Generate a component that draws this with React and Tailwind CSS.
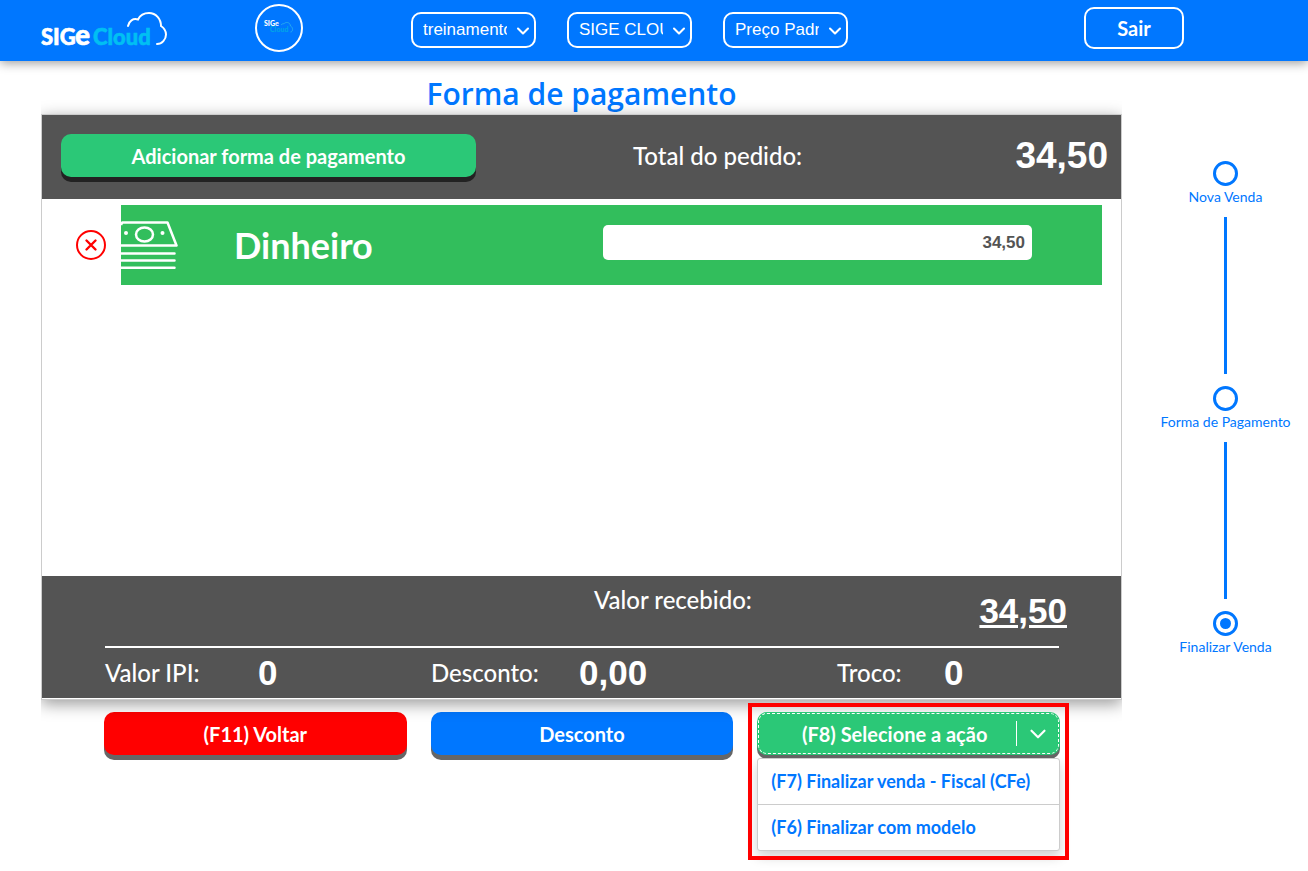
import { useState } from "react";
import { ChevronDown } from "lucide-react";

const storeFilters = [
  { id: "ambiente", label: "Ambiente", options: ["treinamento"] },
  { id: "empresa", label: "Empresa", options: ["SIGE CLOUD"] },
  { id: "tabela", label: "Tabela de preço", options: ["Preço Padrão"] },
];

const steps = ["Nova Venda", "Forma de Pagamento", "Finalizar Venda"];

const totals = [
  { label: "Valor IPI:", value: "0", labelClass: "w-[153px]" },
  { label: "Desconto:", value: "0,00", labelClass: "w-[148px]" },
  { label: "Troco:", value: "0", labelClass: "ml-20 w-[107px]" },
];

const actions = ["(F7) Finalizar venda - Fiscal (CFe)", "(F6) Finalizar com modelo"];

function Logo() {
  return (
    <svg width="127" height="46" viewBox="0 0 127 46" role="img" aria-label="SIGE Cloud" className="overflow-visible">
      <g fontFamily="Lato, sans-serif" fontWeight="900" strokeWidth="0.600">
        <text x="0" y="40" fontSize="22" fill="#fff" stroke="#fff">
          SIG
        </text>
        <text x="34" y="40" fontSize="28" fill="#fff" stroke="#fff">
          e
        </text>
        <text x="52" y="40" fontSize="22" fill="#00bff3" stroke="#00bff3">
          Cloud
        </text>
      </g>
      <path
        d="M87 21c1-5 5-8 10-6.500 2-4 6-6.500 11-6.500 7 0 12 6 12 13 3 2 5 5 5 8.500 0 5-4 9.500-9 9.500"
        fill="none"
        stroke="#fff"
        strokeWidth="2"
        strokeLinecap="round"
      />
    </svg>
  );
}

function LogoBadge() {
  return (
    <div className="flex h-12 w-12 items-center justify-center rounded-full border-2 border-white">
      <svg width="30" height="20" viewBox="0 0 30 20" role="img" aria-label="SIGE Cloud" className="overflow-visible">
        <g fontFamily="Lato, sans-serif" fontWeight="900">
          <text x="0" y="8" fontSize="7" fill="#fff">
            SIGe
          </text>
          <text x="6" y="14" fontSize="7" fill="#00a5e8">
            Cloud
          </text>
        </g>
        <path
          d="M17 7c1-1 2-1.500 3-1.200C21 4 26 3.500 26.500 8c3 1.500 2.500 6 0 6"
          fill="none"
          stroke="#2fb4e8"
          strokeWidth="0.800"
        />
      </svg>
    </div>
  );
}

function MoneyIcon() {
  return (
    <svg width="57" height="50" viewBox="0 0 57 50" fill="none" stroke="#fff" strokeWidth="2.500" aria-hidden="true">
      <path d="M0 5 1.200 2.500H46.500L55.500 25.500H0" strokeLinejoin="round" />
      <ellipse cx="23.500" cy="14.500" rx="8.500" ry="7" />
      <circle cx="5" cy="13" r="2" fill="#fff" stroke="none" />
      <circle cx="41.500" cy="13" r="2" fill="#fff" stroke="none" />
      <path d="M0 33.500h53.500M0 40.500h53.500M0 47.700h53.500" strokeLinecap="round" />
    </svg>
  );
}

function Header() {
  return (
    <header className="relative z-10 flex h-[61px] items-center bg-[#0077ff] pb-[5px] pl-[41px] pr-[124px] shadow-[0_2px_10px_rgba(0,0,0,0.4)]">
      <Logo />
      <div className="ml-[87px]">
        <LogoBadge />
      </div>
      <div className="ml-[108px] flex gap-[31px] pt-1">
        {storeFilters.map((filter) => (
          <div key={filter.id} className="relative">
            <select
              id={filter.id}
              aria-label={filter.label}
              className="h-9 w-[125px] appearance-none rounded-[10px] border-2 border-white bg-transparent pl-[10px] pr-[27px] font-['Liberation_Sans',Arial,sans-serif] text-[17px] text-white"
            >
              {filter.options.map((option) => (
                <option key={option}>{option}</option>
              ))}
            </select>
            <ChevronDown
              size={20}
              strokeWidth={2.5}
              className="pointer-events-none absolute right-[3px] top-[9px] text-white"
            />
          </div>
        ))}
      </div>
      <button
        type="button"
        className="ml-auto h-[42px] w-[100px] rounded-[10px] border-2 border-white text-xl font-bold text-white"
      >
        Sair
      </button>
    </header>
  );
}

function PaymentPanel() {
  return (
    <section className="border border-[#ccc] bg-white shadow-[0_4px_15px_rgba(0,0,0,0.4)] [clip-path:inset(-30px_0px)]">
      <div className="flex h-[84px] items-center bg-[#545454] pb-[3px] pl-[19px] pr-[13px] text-white">
        <button
          type="button"
          className="h-[43px] w-[415px] rounded-[10px] bg-[#2bc877] text-xl font-bold shadow-[0_5px_0_#222]"
        >
          Adicionar forma de pagamento
        </button>
        <span className="ml-[157px] text-2xl font-medium">Total do pedido:</span>
        <span className="ml-auto font-['Liberation_Sans',Arial,sans-serif] text-[37px] font-bold">34,50</span>
      </div>

      {/* Formas adicionadas */}
      <div className="min-h-[377px] pl-[34px] pr-[19px] pt-[6px]">
        <div className="flex items-center gap-[15px]">
          <button type="button" aria-label="Remover Dinheiro">
            <svg width="30" height="30" viewBox="0 0 30 30" fill="none" stroke="#f00">
              <circle cx="15" cy="15" r="14" strokeWidth="2" />
              <path d="m10.500 10.500 9 9m0-9-9 9" strokeWidth="2.400" strokeLinecap="round" />
            </svg>
          </button>
          <div className="flex h-20 flex-1 items-center bg-[#32be5c] pr-[70px]">
            <MoneyIcon />
            <label htmlFor="dinheiro" className="ml-14 text-[36px] font-bold text-white">
              Dinheiro
            </label>
            <input
              id="dinheiro"
              defaultValue="34,50"
              className="mb-[5px] ml-auto h-[35px] w-[429px] rounded-[5px] bg-white px-[7px] text-right font-['Liberation_Sans',Arial,sans-serif] text-[17px] font-bold text-[#545454]"
            />
          </div>
        </div>
      </div>

      <div className="bg-[#545454] pl-[63px] pr-[62px] text-white">
        <div className="flex h-[72px] items-start border-b-2 border-white">
          <span className="ml-[489px] mt-2 text-2xl font-medium">Valor recebido:</span>
          <span className="-mr-2 ml-auto mt-[15px] font-['Liberation_Sans',Arial,sans-serif] text-[35px] font-bold leading-10 underline">
            34,50
          </span>
        </div>
        <div className="grid h-[50px] grid-cols-3 items-center gap-6">
          {totals.map((item) => (
            <div key={item.label} className="flex items-center">
              <span className={`${item.labelClass} text-2xl font-medium`}>{item.label}</span>
              <span className="font-['Liberation_Sans',Arial,sans-serif] text-[35px] font-bold leading-10">
                {item.value}
              </span>
            </div>
          ))}
        </div>
      </div>
      <div className="h-px bg-white" />
    </section>
  );
}

function ActionMenu() {
  const [open, setOpen] = useState(true);

  return (
    <div className="relative">
      <button
        type="button"
        aria-expanded={open}
        onClick={() => setOpen(!open)}
        className="flex h-[43px] w-full items-center rounded-[10px] bg-[#2bc877] text-white shadow-[0_4px_0_#666] outline-1 -outline-offset-2 outline-dashed outline-white"
      >
        <span className="flex-1 pl-4 text-xl font-bold">(F8) Selecione a ação</span>
        <span className="flex h-[25px] w-11 items-center justify-center border-l border-white">
          <ChevronDown size={26} strokeWidth={2} />
        </span>
      </button>
      {open && (
        <ul className="mt-[3px] rounded-[3px] border border-[#ccc] bg-white shadow-[0_6px_12px_rgba(0,0,0,0.18)]">
          {actions.map((action) => (
            <li key={action} className="border-b border-[#ccc] last:border-b-0">
              <a href="#" className="block px-[13px] text-lg font-bold leading-[45px] text-[#0077ff]">
                {action}
              </a>
            </li>
          ))}
        </ul>
      )}
      <div className="pointer-events-none absolute -inset-[9px] border-4 border-[#f00]" />
    </div>
  );
}

function Steps() {
  return (
    <ol className="flex w-[165px] flex-col items-center pt-[100px]">
      {steps.map((step, i) => (
        <li key={step} className="flex flex-col items-center">
          <label className="flex flex-col items-center text-sm leading-[22px] text-[#0077ff]">
            <input
              type="radio"
              name="etapa"
              defaultChecked={i === 2}
              className="h-[25px] w-[25px] appearance-none rounded-full border-3 border-[#0077ff] bg-clip-content p-1 checked:bg-[#0077ff]"
            />
            {step}
          </label>
          {i < steps.length - 1 && <div className="mb-3 mt-[9px] h-[157px] w-[3px] bg-[#0077ff]" />}
        </li>
      ))}
    </ol>
  );
}

export default function App() {
  return (
    <div className="min-h-screen bg-white font-['Lato',sans-serif]">
      <Header />
      <div className="flex gap-[21px] pl-[41px]">
        <main className="flex-1 pb-5">
          <h1 className="pt-3 text-center font-['Open_Sans',sans-serif] text-[30px] font-semibold leading-[41px] text-[#0077ff]">
            Forma de pagamento
          </h1>
          <PaymentPanel />
          <div className="mt-3 grid grid-cols-3 items-start gap-6 pl-[63px] pr-[62px]">
            <button
              type="button"
              className="h-[43px] rounded-[10px] bg-[#f00] text-xl font-bold text-white shadow-[0_5px_0_#666]"
            >
              (F11) Voltar
            </button>
            <button
              type="button"
              className="h-[43px] rounded-[10px] bg-[#0077ff] text-xl font-bold text-white shadow-[0_5px_0_#666]"
            >
              Desconto
            </button>
            <ActionMenu />
          </div>
        </main>
        <Steps />
      </div>
    </div>
  );
}
